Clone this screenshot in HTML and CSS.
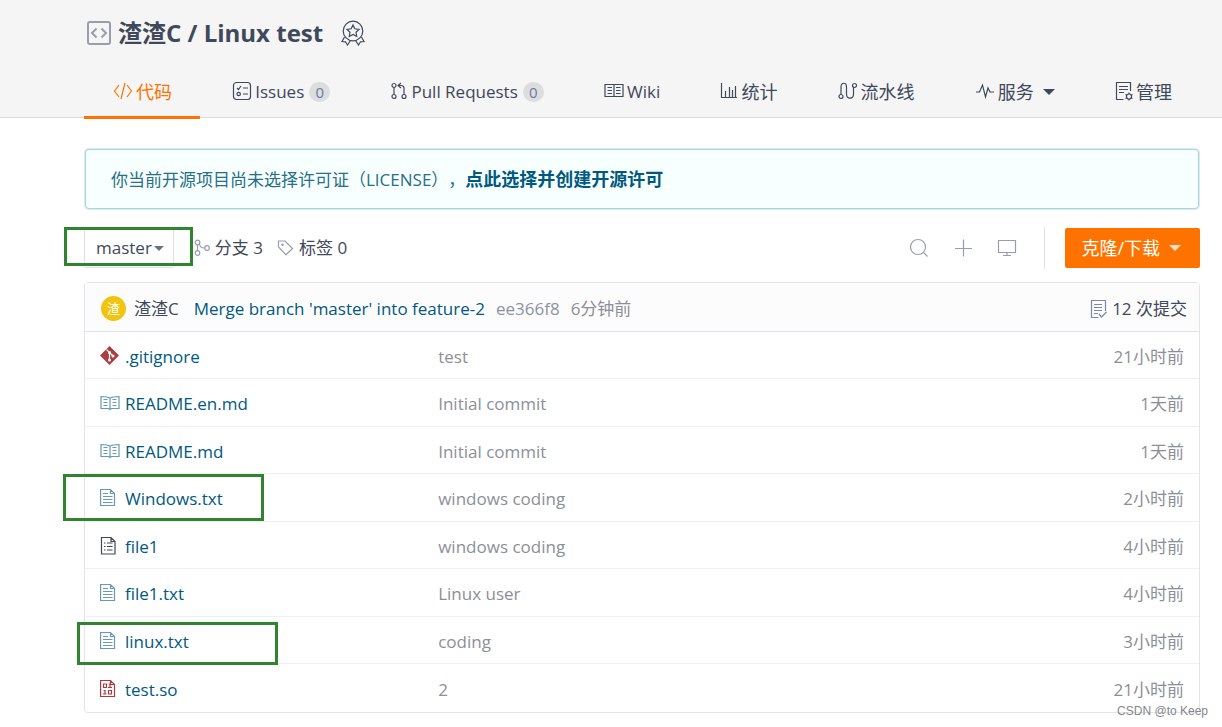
FILE: index.html
```html
<!DOCTYPE html>
<html lang="zh-CN">
<head>
<meta charset="utf-8">
<title>渣渣C / Linux test</title>
<link rel="stylesheet" href="styles.css">
</head>
<body>
<svg class="sprite" aria-hidden="true">
  <symbol id="book" viewBox="0 0 20 16"><path d="M10 3.2C8.5 2 6 1.5 1 1.500V13.500H8.500L10 14.500L11.500 13.500H19V1.500C14 1.500 11.500 2 10 3.200ZM10 3.200V14.500M3.500 4.500H7.500M3.500 7.500H7.500M3.500 10.500H7.500M12.500 4.500H16.500M12.500 7.500H16.500M12.500 10.500H16.500"/></symbol>
  <symbol id="text-file" viewBox="0 0 16 20"><path d="M.6 1.500H10.500L14.500 5.500V17.500H.6ZM10.500 1.500V5.500H14.500M3 5.500H8M3 8.500H12.500M3 11.500H12.500M3 14.500H12.500"/></symbol>
</svg>

<header class="repo-header">
  <div class="repo-title">
    <svg class="repo-icon" width="26" height="26" viewBox="0 0 26 26"><rect x="2" y="2" width="22" height="22" rx="2"/><path d="M10.500 8.500L6 13L10.500 17.500M15.500 8.500L20 13L15.500 17.500"/></svg>
    <h1><a href="#">渣渣C</a> / <a href="#">Linux test</a></h1>
    <svg class="medal" width="24" height="26" viewBox="0 0 24 26"><circle cx="12" cy="11" r="9.800"/><path d="M12 5L13.800 8.800L18 9.400L15 12.300L15.700 16.500L12 14.500L8.300 16.500L9 12.300L6 9.400L10.200 8.800ZM3.500 17L1 21.500L4.500 21.800L6.500 25L9.500 20.500M20.500 17L23 21.500L19.500 21.800L17.500 25L14.500 20.500"/></svg>
  </div>
  <nav class="tabs">
    <a class="tab active" href="#"><svg width="20" height="18" viewBox="0 0 20 18"><path d="M6 3L1.500 9L6 15M14 3L18.500 9L14 15M12 1L8 17"/></svg>代码</a>
    <a class="tab" href="#"><svg width="20" height="20" viewBox="0 0 20 20"><rect x="1.500" y="1.500" width="17" height="17" rx="3"/><path d="M5 7L6.500 8.500L9 5M11 7H16M11 13H16"/><circle cx="6.700" cy="13" r="1.700"/></svg><span class="latin">Issues</span><span class="badge">0</span></a>
    <a class="tab" href="#"><svg width="18" height="18" viewBox="0 0 18 18"><circle cx="4" cy="3.500" r="2"/><circle cx="4" cy="14.500" r="2"/><circle cx="14" cy="14.500" r="2"/><path d="M4 5.500V12.500M14 12.500V6Q14 3.500 11 3.500H8M11 1L8 3.500L11 6"/></svg><span class="latin">Pull Requests</span><span class="badge">0</span></a>
    <a class="tab" href="#"><svg width="20" height="18" viewBox="0 0 20 18"><path d="M1 2.500H19V14.500H1ZM10 2.500V15M3.500 5.500H8M3.500 8.500H8M3.500 11.500H8M12 5.500H16.500M12 8.500H16.500M12 11.500H16.500"/></svg><span class="latin">Wiki</span></a>
    <a class="tab" href="#"><svg width="18" height="18" viewBox="0 0 18 18"><path d="M1.500 1V15.500H17M5.500 9V15M9.500 5V15M12.500 8V15M15.500 4V15"/></svg>统计</a>
    <a class="tab" href="#"><svg width="20" height="18" viewBox="0 0 20 18"><circle cx="3" cy="14.500" r="2"/><circle cx="16.500" cy="3.500" r="2"/><path d="M3 12.500V5C3 0 8.500 0 8.500 5V12C8.500 17.500 15.500 17.500 15.500 12V5.500"/></svg>流水线</a>
    <a class="tab" href="#"><svg width="20" height="18" viewBox="0 0 20 18"><path d="M1 10H4.500L7.500 3L10.500 15L13 6L15 10H19"/></svg>服务<span class="caret large"></span></a>
    <a class="tab" href="#"><svg width="18" height="20" viewBox="0 0 18 20"><path d="M8.500 18.500H1.500V1.500H15.500V10M4 5.500H13M4 8.500H13M4 11.500H9"/><circle cx="14" cy="15.500" r="2.500"/><path d="M14 11.500V13M14 18V19.500M10.500 13.500L12 14.300M16 16.700L17.500 17.500M17.500 13.500L16 14.300M10.500 17.500L12 16.700"/></svg>管理</a>
  </nav>
</header>

<main class="content">
  <div class="notice">你当前开源项目尚未选择许可证（LICENSE），<a href="#">点此选择并创建开源许可</a></div>

  <div class="toolbar">
    <div class="branch">
      <button class="branch-button" type="button">master<span class="caret"></span></button>
      <span class="mark mark-branch"></span>
    </div>
    <a class="ref" href="#"><svg width="16" height="18" viewBox="0 0 16 18"><circle cx="3.500" cy="3.500" r="2.300"/><circle cx="3.500" cy="14" r="2.300"/><circle cx="13" cy="9" r="2.300"/><path d="M3.500 6V11.500M5.500 5C6 8 8 9 10.500 9"/></svg>分支 3</a>
    <a class="ref" href="#"><svg width="17" height="18" viewBox="0 0 17 18"><path d="M1.500 2V8L9 15.800L15.500 9.500L8 2Z"/><circle cx="5.500" cy="5.800" r=".7"/></svg>标签 0</a>
    <div class="tools">
      <button class="tool" type="button" aria-label="搜索"><svg width="20" height="20" viewBox="0 0 20 20"><circle cx="9" cy="9" r="7.500"/><path d="M14.500 14.500L18.500 18.500"/></svg></button>
      <button class="tool" type="button" aria-label="新建"><svg width="20" height="20" viewBox="0 0 20 20"><path d="M10.500 1.500V18.500M2 10.500H19"/></svg></button>
      <button class="tool" type="button" aria-label="Web IDE"><svg width="20" height="20" viewBox="0 0 20 20"><path d="M1.500 2.500H18.500V14.500H1.500ZM10 14.500V17.500M6 17.500H14"/></svg></button>
    </div>
    <button class="clone" type="button">克隆/下载<span class="caret large"></span></button>
  </div>

  <section class="files">
    <div class="commit">
      <span class="avatar">渣</span>
      <a class="author" href="#">渣渣C</a>
      <a class="message" href="#">Merge branch 'master' into feature-2</a>
      <a class="hash" href="#">ee366f8</a>
      <span class="ago">6分钟前</span>
      <a class="count" href="#"><svg width="18" height="20" viewBox="0 0 18 20"><path d="M8.500 18.500H1.500V1.500H15.500V12M4 5.500H12M4 8.500H12M4 11.500H12M4 14.500H8M9 15L11.500 18L16.500 13"/></svg>12 次提交</a>
    </div>
    <table class="listing">
      <tbody>
        <tr><td class="name"><a href="#"><svg class="git" width="20" height="20" viewBox="0 0 20 20"><path class="diamond" d="M9.500 0L19 9.500L9.500 19L0 9.500Z"/><path class="graph" d="M6.500 3.500L9.500 6.500V14M9.500 6.500L13 10"/><circle cx="9.500" cy="6.500" r="1.500"/><circle cx="9.500" cy="14" r="1.500"/><circle cx="13" cy="10" r="1.500"/></svg>.gitignore</a></td><td class="note">test</td><td class="time">21小时前</td></tr>
        <tr><td class="name"><a href="#"><svg width="20" height="16"><use href="#book"/></svg>README.en.md</a></td><td class="note">Initial commit</td><td class="time">1天前</td></tr>
        <tr><td class="name"><a href="#"><svg width="20" height="16"><use href="#book"/></svg>README.md</a></td><td class="note">Initial commit</td><td class="time">1天前</td></tr>
        <tr><td class="name"><a href="#"><svg width="16" height="20"><use href="#text-file"/></svg>Windows.txt</a><span class="mark mark-windows"></span></td><td class="note">windows coding</td><td class="time">2小时前</td></tr>
        <tr><td class="name"><a href="#"><svg class="plain" width="18" height="20" viewBox="0 0 18 20"><path d="M1.500 1.500H11L15 5.500V18H1.500ZM11 1.500V5.500H15M4 7H5.500M4 10.500H5.500M4 14H5.500M7 7H12.500M7 10.500H12.500M7 14H12.500"/></svg>file1</a></td><td class="note">windows coding</td><td class="time">4小时前</td></tr>
        <tr><td class="name"><a href="#"><svg width="16" height="20"><use href="#text-file"/></svg>file1.txt</a></td><td class="note">Linux user</td><td class="time">4小时前</td></tr>
        <tr><td class="name"><a href="#"><svg width="16" height="20"><use href="#text-file"/></svg>linux.txt</a><span class="mark mark-linux"></span></td><td class="note">coding</td><td class="time">3小时前</td></tr>
        <tr><td class="name"><a href="#"><svg class="binary" width="16" height="20" viewBox="0 0 16 20"><path d="M.6 1.500H10.500L14.500 5.500V17.500H.6ZM10.500 1.500V5.500H14.500M3.500 5H6.500V8.500H3.500ZM8.500 5H10V8.500M8 8.500H12M3.500 11.500H5V15M3 15H6.500M8.500 11.500H11.500V15H8.500Z"/></svg>test.so</a></td><td class="note">2</td><td class="time">21小时前</td></tr>
      </tbody>
    </table>
  </section>
</main>
<div class="watermark">CSDN @to Keep</div>
</body>
</html>
```
FILE: styles.css
```css
* {
  box-sizing: border-box;
}

body {
  position: relative;
  min-height: 100vh;
  margin: 0;
  background: #fff;
  color: #40485b;
  font: 17px/24px "Open Sans", "Noto Sans CJK SC", sans-serif;
  text-spacing-trim: space-all;
}

a {
  color: inherit;
  text-decoration: none;
}

button {
  font: inherit;
  color: inherit;
  cursor: pointer;
}

svg {
  flex: none;
  fill: none;
  stroke: currentColor;
  stroke-width: 1.2;
}

.sprite {
  position: absolute;
  width: 0;
  height: 0;
}

.caret {
  border: 5px solid transparent;
  border-top-color: currentColor;
  border-bottom: 0;
}

.caret.large {
  border-width: 6px 6px 0;
}

/* Header */

.repo-header {
  padding: 13px 22px 0 84px;
  background: #f5f5f5;
  border-bottom: 1px solid #dcdcdc;
}

.repo-title {
  display: flex;
  align-items: center;
  height: 40px;
}

.repo-title h1 {
  margin: 0 18px 0 6px;
  font-size: 24px;
  line-height: 40px;
}

.repo-icon {
  margin-left: 2px;
  color: #989eb0;
  stroke-width: 2;
}

.tabs {
  display: flex;
  justify-content: space-between;
  margin-bottom: -2px;
}

.tab {
  display: flex;
  align-items: center;
  gap: 3px;
  height: 66px;
  padding: 14px 28px 0 29px;
  border-bottom: 3px solid transparent;
  font-size: 18px;
  white-space: nowrap;
}

.tab svg {
  margin-bottom: 2px;
}

.tab.active {
  color: #fe7300;
  border-color: #fe7300;
}

.latin {
  font-size: 17px;
}

.badge {
  min-width: 21px;
  height: 20px;
  margin-left: 2px;
  border-radius: 10px;
  background: #dcddde;
  color: #6c7a9c;
  font-size: 15px;
  line-height: 20px;
  text-align: center;
}

.tab .caret {
  margin-left: 6px;
}

/* License notice */

.content {
  padding: 31px 22px 0 84px;
}

.notice {
  margin: 0 1px;
  padding: 17px 25px 16px;
  border: 1px solid #a9d5de;
  border-radius: 4px;
  background: #f8ffff;
  box-shadow: 0 0 1px 1px #d6eaee;
  color: #276f86;
}

.notice a {
  color: #005980;
  font-size: 18px;
  font-weight: 700;
}

/* Branch toolbar */

.toolbar {
  display: flex;
  align-items: center;
  height: 42px;
  margin-top: 18px;
}

.branch {
  position: relative;
  margin-right: 20px;
}

.branch-button {
  display: flex;
  align-items: center;
  gap: 2px;
  height: 40px;
  padding: 0 9px 0 11px;
  border: 1px solid #dce3e8;
  border-radius: 2px;
  background: #fff;
}

.branch-button .caret {
  color: #6b7184;
}

.mark {
  position: absolute;
  border: 3px solid #31842f;
  pointer-events: none;
}

.mark-branch {
  inset: -1px -19px 2px -20px;
}

.ref {
  display: flex;
  align-items: center;
  gap: 5px;
  margin-right: 14px;
  white-space: nowrap;
}

.ref svg {
  color: #989eb0;
}

.tools {
  display: flex;
  align-items: center;
  gap: 24px;
  height: 42px;
  margin-left: auto;
  padding-right: 27px;
  border-right: 1px solid #dce3e8;
}

.tool {
  display: flex;
  padding: 0;
  border: 0;
  background: none;
  color: #989eb0;
}

.clone {
  display: flex;
  align-items: center;
  gap: 9px;
  height: 40px;
  margin-left: 20px;
  padding: 0 19px 0 16px;
  border: 0;
  border-radius: 2px;
  background: #fe7300;
  color: #fff;
  font-size: 18px;
}

.clone .caret {
  color: #ffe0c8;
}

/* File list */

.files {
  margin-top: 13px;
  border: 1px solid #dfe5ea;
  border-radius: 4px;
}

.commit {
  display: flex;
  align-items: center;
  height: 49px;
  padding: 3px 12px 0 16px;
  border-bottom: 1px solid #dce3e8;
  background: #fcfcfc;
}

.avatar {
  width: 25px;
  height: 25px;
  border-radius: 50%;
  background: #f1c40f;
  color: #fff;
  font-size: 13px;
  line-height: 24px;
  text-align: center;
}

.author {
  margin: 0 15px 0 8px;
}

.message,
.name {
  color: #005980;
}

.hash {
  margin: 0 11px;
  color: #8c92a4;
}

.ago,
.note,
.time {
  color: #8c8f98;
}

.count {
  display: flex;
  align-items: center;
  gap: 4px;
  margin-left: auto;
}

.count svg {
  color: #7d879f;
}

.listing {
  width: 100%;
  border-collapse: separate;
  border-spacing: 0;
  table-layout: fixed;
}

.listing td {
  height: 47px;
  padding: 3px 15px 0;
  border-bottom: 1px solid #edf1f5;
}

.listing tr:nth-child(even) td {
  height: 48px;
}

.listing tr:last-child td {
  border-bottom: 0;
}

.listing .name {
  position: relative;
  width: 30%;
}

.name a {
  display: grid;
  grid-template-columns: 20px auto;
  align-items: center;
  column-gap: 5px;
}

.name svg {
  margin-bottom: 2px;
  color: #669bb3;
}

.name .plain {
  color: #40485b;
}

.name .binary {
  color: #aa3a42;
}

.name .git {
  stroke: none;
}

.git .diamond {
  fill: #aa3e3e;
}

.git .graph {
  stroke: #fff;
}

.git circle {
  fill: #fff;
}

.mark-windows {
  width: 201px;
  top: 0;
  bottom: 0;
  left: -22px;
}

.mark-linux {
  width: 201px;
  top: 5px;
  bottom: -2px;
  left: -8px;
}

.listing .note {
  padding-left: 19px;
}

.listing .time {
  width: 200px;
  text-align: right;
}

.watermark {
  position: absolute;
  right: 14px;
  bottom: 8px;
  color: #85878b;
  font: 12px/16px "Liberation Sans", sans-serif;
}
```
